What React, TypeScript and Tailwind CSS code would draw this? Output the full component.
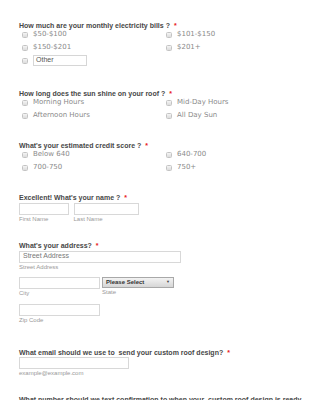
const sans = "font-['Liberation_Sans',Arial,sans-serif]";
const dv = "font-['DejaVu_Sans',sans-serif]";

type Opt = { label: string; other?: boolean };

const Title = ({ text }: { text: string }) => (
  <div className={`${sans} whitespace-pre text-[7px] leading-[8px] font-bold text-[#474747]`}>
    {text}
    <span className="ml-[4px] text-[#e82020]">*</span>
  </div>
);

const Checkbox = () => (
  <span className="ml-[2.5px] mr-[5.5px] inline-block h-[6px] w-[6px] shrink-0 rounded-[1.5px] border border-[#c4c4c4] bg-gradient-to-b from-[#f4f4f4] to-[#dcdcdc]" />
);

const Options = ({ items }: { items: Opt[] }) => (
  <div className="-mt-[2px] grid grid-cols-[144px_1fr]">
    {items.map((o, i) => (
      <div key={i} className="flex h-[13px] items-center">
        <Checkbox />
        {o.other ? (
          <div
            className={`${sans} flex h-[11px] w-[54px] items-center border border-[#d6d6d6] pl-[2px] text-[7px] text-[#555]`}
          >
            Other
          </div>
        ) : (
          <span className={`${dv} text-[7px] leading-none text-[#8a8a8a]`}>{o.label}</span>
        )}
      </div>
    ))}
  </div>
);

const Box = ({ w, children }: { w: string; children?: React.ReactNode }) => (
  <div
    className={`${sans} flex h-[12px] items-center border border-[#d8d8d8] bg-white pl-[3px] text-[7px] text-[#777] ${w}`}
  >
    {children}
  </div>
);

const Sub = ({ text }: { text: string }) => (
  <div className={`${sans} h-[8px] text-[6px] leading-[8px] text-[#999]`}>{text}</div>
);

export default function App() {
  return (
    <div className="h-[400px] w-[325px] overflow-hidden bg-white pl-[19px] pt-[22px]">
      <section>
        <Title text="How much are your monthly electricity bills ?" />
        <Options
          items={[
            { label: "$50-$100" },
            { label: "$101-$150" },
            { label: "$150-$201" },
            { label: "$201+" },
            { label: "", other: true },
          ]}
        />
      </section>

      <section className="mt-[23px]">
        <Title text="How long does the sun shine on your roof ?" />
        <Options
          items={[
            { label: "Morning Hours" },
            { label: "Mid-Day Hours" },
            { label: "Afternoon Hours" },
            { label: "All Day Sun" },
          ]}
        />
      </section>

      <section className="mt-[20px]">
        <Title text="What's your estimated credit score ?" />
        <Options
          items={[
            { label: "Below 640" },
            { label: "640-700" },
            { label: "700-750" },
            { label: "750+" },
          ]}
        />
      </section>

      <section className="mt-[20px]">
        <Title text="Excellent! What's your name ?" />
        <div className="mt-[0.5px] flex gap-[4.5px]">
          <div>
            <Box w="w-[50px]" />
            <Sub text="First Name" />
          </div>
          <div>
            <Box w="w-[65px]" />
            <Sub text="Last Name" />
          </div>
        </div>
      </section>

      <section className="mt-[19px]">
        <Title text="What's your address?" />
        <div className="mt-[1px]">
          <Box w="w-[162px]">Street Address</Box>
          <Sub text="Street Address" />
        </div>
        <div className="mt-[6px] flex gap-[2px]">
          <div>
            <Box w="w-[81px]" />
            <Sub text="City" />
          </div>
          <div>
            <div className="flex h-[11.5px] w-[72px] items-center justify-between border border-[#a8a8a8] bg-gradient-to-b from-[#f3f3f3] to-[#d6d6d6] pl-[3px] pr-[3px]">
              <span className={`${sans} text-[6px] font-bold text-[#333]`}>Please Select</span>
              <span className="text-[4px] leading-none text-[#444]">▼</span>
            </div>
            <Sub text="State" />
          </div>
        </div>
        <div className="mt-[7px]">
          <Box w="w-[81px]" />
          <Sub text="Zip Code" />
        </div>
      </section>

      <section className="mt-[25px]">
        <Title text="What email should we use to  send your custom roof design?" />
        <Box w="w-[110px]" />
        <Sub text="example@example.com" />
      </section>

      <section className="mt-[19px]">
        <div className={`${sans} whitespace-pre text-[7px] leading-[8px] font-bold text-[#474747]`}>
          What number should we text confirmation to when your  custom roof design is ready
        </div>
      </section>
    </div>
  );
}
